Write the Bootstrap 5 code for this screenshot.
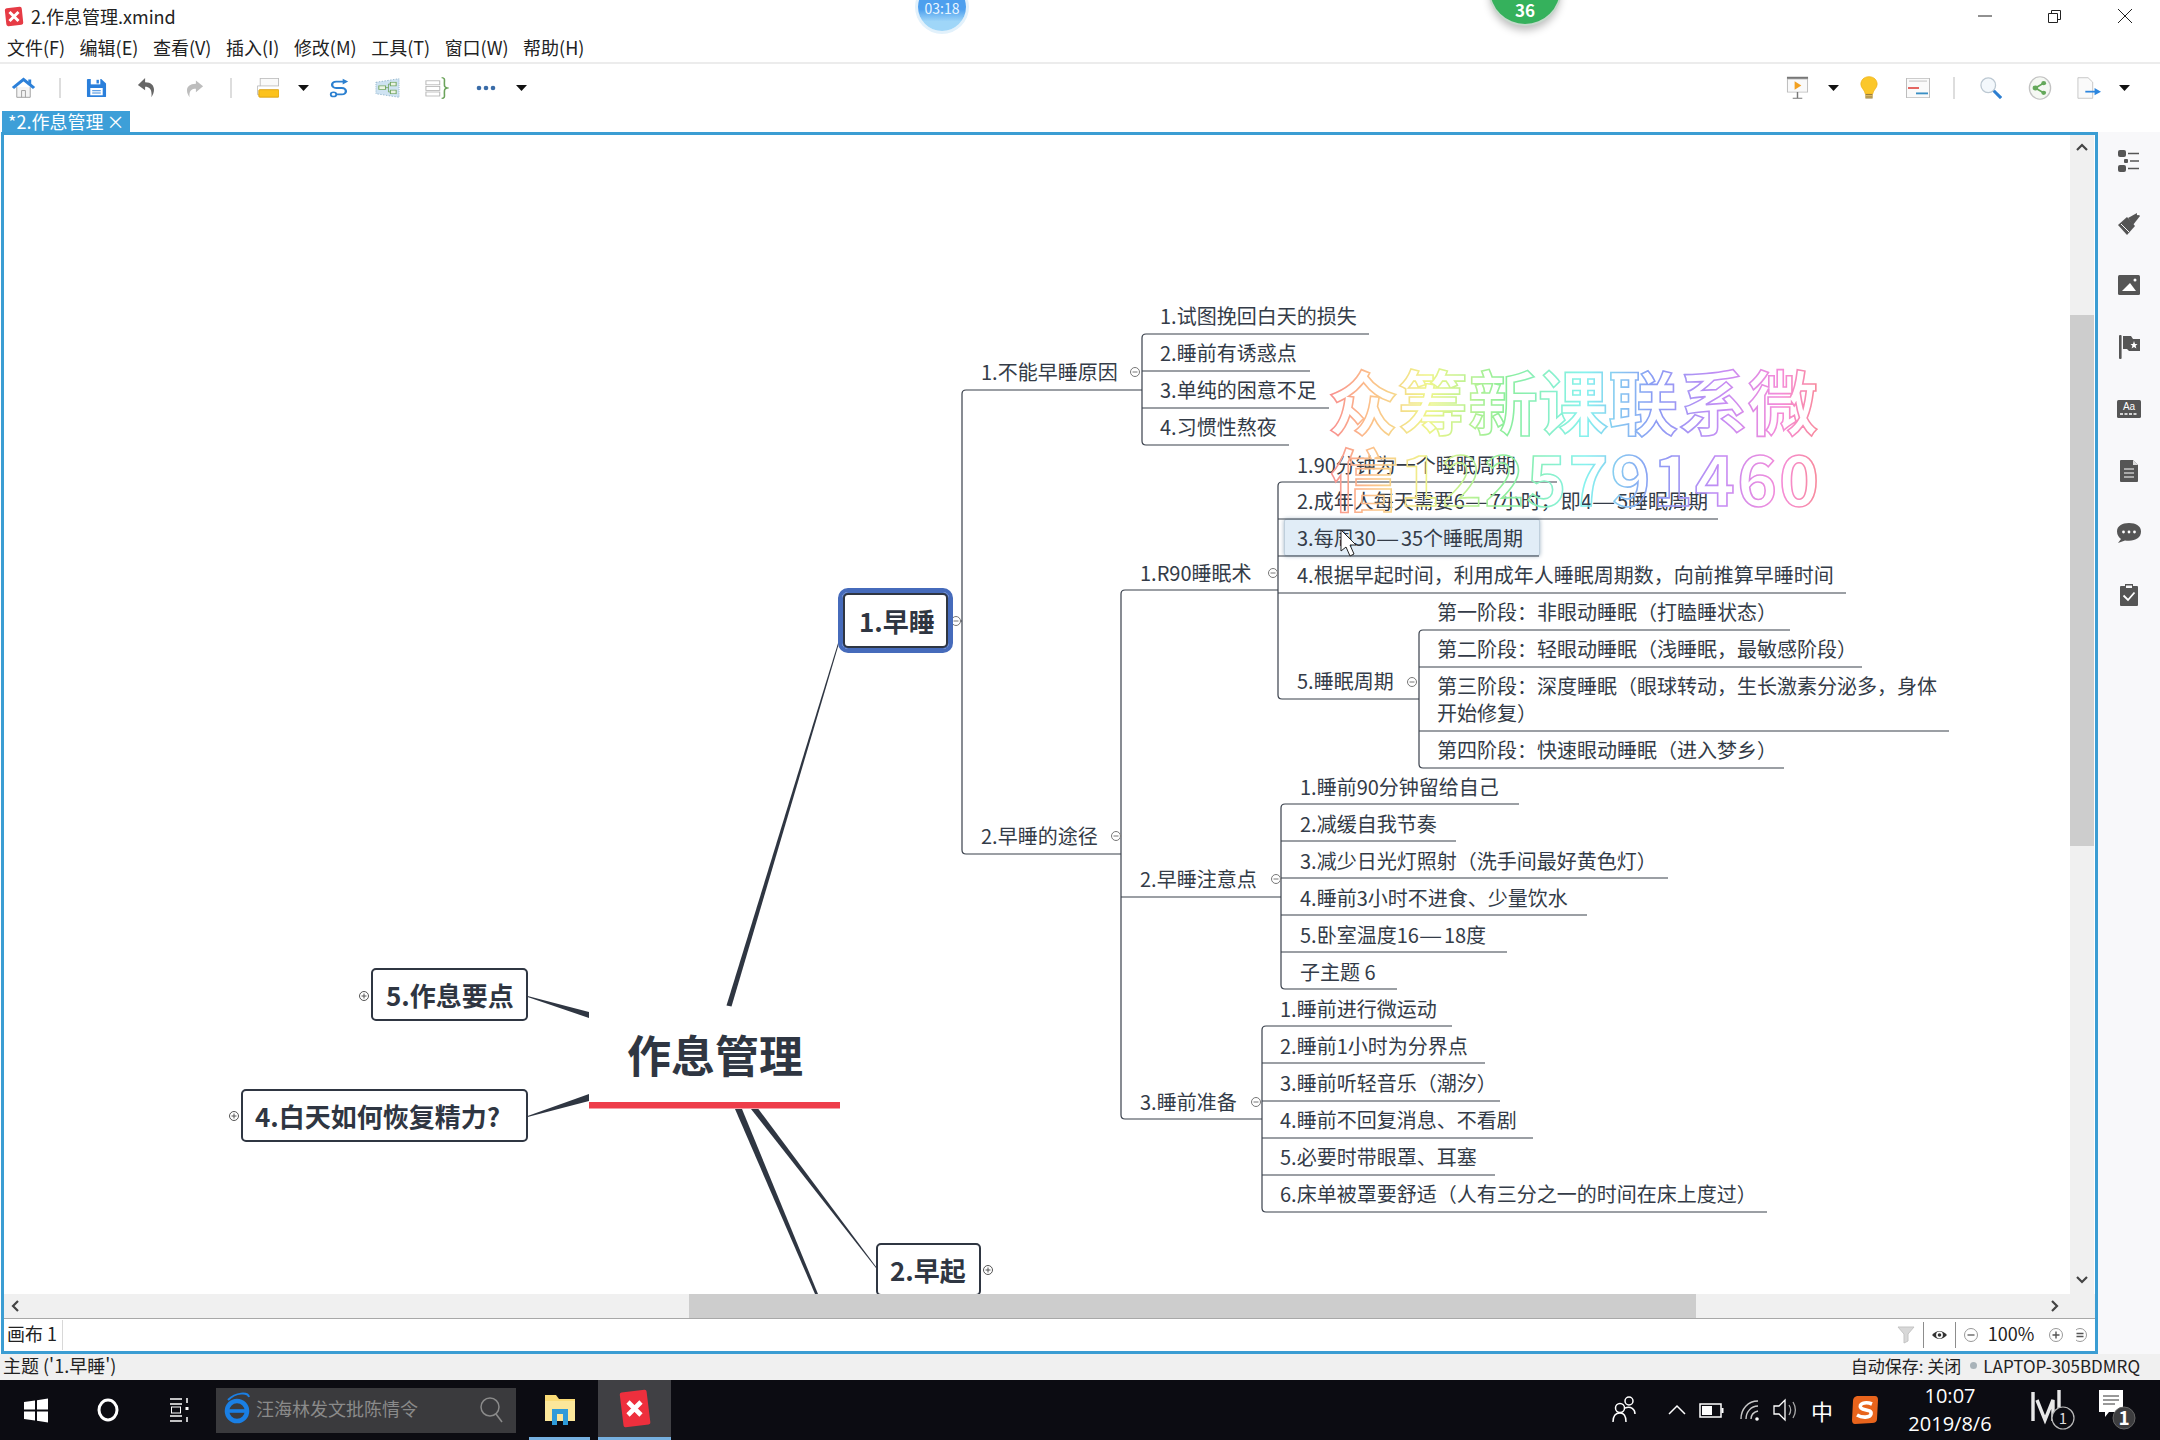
<!DOCTYPE html>
<html lang="zh-CN">
<head>
    <meta charset="UTF-8">
    <title>2.作息管理.xmind</title>
    <link href="https://cdn.jsdelivr.net/npm/bootstrap@5.3.0/dist/css/bootstrap.min.css" rel="stylesheet">
    <style>
        body {
            width: 2160px;
            height: 1440px;
            overflow: hidden;
            background: #fff;
            color: #222;
            font-family: "Noto Sans CJK SC", "Liberation Sans", sans-serif;
            font-size: 18px;
        }
        /* title, menu and tool bars */
        .title-bar { height: 32px; }
        .app-title { margin-left: 7px; }
        .win-btn { width: 70px; height: 32px; }
        .menu-bar { height: 30px; padding-left: 7px; gap: 14.5px; line-height: 30px; }
        .tool-bar { height: 49px; border-top: 2px solid #ececec; margin-left: -1px; }
        .tb-cell { width: 49px; height: 47px; }
        .tb-narrow { width: 22px; height: 47px; }
        .tb-sep { width: 24px; height: 47px; }
        .tb-right { padding-right: 25px; }
        .tab-strip { height: 21px; padding-left: 2px; }
        .file-tab {
            width: 128px;
            height: 21px;
            padding-left: 6px;
            background: #3d9fd8;
            color: #fff;
            font-size: 18px;
            line-height: 21px;
            white-space: nowrap;
        }
        .file-tab span { margin-left: 3px; }
        /* editor frame */
        .editor-row { height: 1222px; }
        .editor-frame {
            width: 2097px;
            margin-left: 1px;
            border: 3px solid #3b9dd3;
        }
        .map-area { height: 1159px; }
        .map-canvas { width: 2066px; height: 1159px; overflow: hidden; }
        .map-lines { position: absolute; left: 0; top: 0; }
        .v-scroll { width: 24px; background: #f0f0f0; }
        .v-up { height: 180px; padding-top: 8px; }
        .v-thumb { height: 531px; background: #cdcdcd; }
        .v-down { padding-bottom: 10px; }
        .h-scroll { height: 24px; background: #f0f0f0; }
        .h-left { width: 685px; padding-left: 7px; }
        .h-thumb { width: 1007px; background: #cdcdcd; }
        .h-right { padding-right: 36px; }
        .sheet-bar { height: 33px; border-top: 1px solid #a8a8a8; }
        .sheet-tab { width: 59px; padding: 0 0 3px 3px; border-right: 1px solid #d8d8d8; white-space: nowrap; }
        .sheet-tools { margin-right: 2px; }
        .sheet-sep { width: 1px; height: 26px; background: #8d8d8d; }
        .zoom-val { width: 50px; padding-bottom: 3px; color: #222; }
        .side-panel { background: #f8f8fa; padding-top: 17px; gap: 38px; }
        .side-cell { height: 24px; }
        /* map nodes */
        .mm-text {
            position: absolute;
            transform: translateY(-50%);
            color: #343c48;
            font-size: 20px;
            line-height: 1.2;
            white-space: nowrap;
        }
        .mm-dash { display: inline-block; width: 25px; transform: scaleX(1.3); transform-origin: left center; }
        .mm-topic {
            position: absolute;
            border: 2px solid #2f3642;
            border-radius: 5px;
            background: #fff;
            color: #2f3642;
            font-size: 26px;
            font-weight: 700;
            line-height: 1.2;
            white-space: nowrap;
        }
        .mm-topic-on {
            outline: 4px solid #466bbb;
            outline-offset: 1px;
            box-shadow: 0 0 0 1px #466bbb;
        }
        .mm-root {
            position: absolute;
            transform: translate(-50%, -50%);
            color: #2f3642;
            font-size: 44px;
            font-weight: 700;
            line-height: 1.2;
            white-space: nowrap;
        }
        .mm-hilite {
            position: absolute;
            background: #e1edf7;
            border: 1px solid #bfcfdc;
            border-radius: 2px;
            box-shadow: 0 0 4px #9fb2c2;
        }
        .wm-text {
            font-family: "Noto Sans CJK SC", sans-serif;
            font-weight: 700;
            fill: none;
            stroke: url(#rainbow);
            stroke-width: 1.6px;
        }
        /* status and task bars */
        .status-bar { height: 26px; padding: 0 20px 3px 3px; background: #f0f0f0; font-size: 17px; white-space: nowrap; }
        .status-topic { font-size: 18px; }
        .status-dot { width: 7px; height: 7px; margin: 0 6px 0 9px; border-radius: 50%; background: #a9b3b9; }
        .task-bar { height: 60px; background: #0c0c12; color: #fff; }
        .search-box {
            width: 300px;
            height: 45px;
            margin: 0 13px 0 0;
            background: #3a3a3d;
            color: #8a8a8a;
            padding-right: 12px;
        }
        .search-box span { flex: 1; padding-bottom: 3px; white-space: nowrap; }
        .task-app { height: 60px; border-bottom: 3px solid #76b0e0; }
        .task-folder { width: 61px; margin-right: 8px; }
        .task-xmind { width: 73px; background: #404044; }
        .tray-ime { width: 38px; font-size: 22px; text-align: center; }
        .tray-clock { width: 114px; font-family: "Open Sans", "Noto Sans CJK SC", sans-serif; font-size: 20px; line-height: 28px; text-align: center; }
        .tray-end { margin-right: 19px; }
        /* floating timers from the recording tool */
        .float-timer {
            position: absolute;
            left: 918px;
            top: -17px;
            width: 48px;
            height: 48px;
            border-radius: 50%;
            background: linear-gradient(#4d9fee 55%, #9fd6f8 80%);
            box-shadow: 0 0 0 3px #e2f1fb;
            color: #e8f5ff;
            font-size: 14px;
            text-align: center;
            padding-top: 17px;
            line-height: 16px;
        }
        .float-count {
            position: absolute;
            left: 1490px;
            top: -46px;
            width: 70px;
            height: 70px;
            border-radius: 50%;
            background: #35b15c;
            box-shadow: 0 0 0 2px #c5d8cb, 0 6px 8px #b9b9b9;
            color: #fff;
            font-size: 17px;
            font-weight: 700;
            text-align: center;
            padding-top: 44px;
            line-height: 24px;
        }
    </style>
</head>
<body>
<div class="d-flex flex-column">

    <!-- Title bar -->
    <div class="title-bar d-flex align-items-center">
        <svg class="ms-1" width="20" height="21" viewBox="0 0 20 21"><rect x="1.5" y="1.5" width="17" height="18" rx="2" fill="#e63b45" transform="rotate(-6 10 10)"/><path d="M5.5 6 14.5 15M14.5 6 5.5 15" stroke="#fff" stroke-width="3"/></svg>
        <span class="app-title">2.作息管理.xmind</span>
        <div class="ms-auto d-flex">
            <div class="win-btn d-flex align-items-center justify-content-center"><svg width="16" height="16"><path d="M1 8H15" stroke="#222" stroke-width="1"/></svg></div>
            <div class="win-btn d-flex align-items-center justify-content-center"><svg width="16" height="16"><path d="M1.5 5.5H10.5V14.5H1.5ZM4.5 5V2.5H13.5V11.5H11" fill="none" stroke="#222"/></svg></div>
            <div class="win-btn d-flex align-items-center justify-content-center"><svg width="16" height="16"><path d="M1 1 15 15M15 1 1 15" stroke="#222"/></svg></div>
        </div>
    </div>

    <!-- Menu -->
    <div class="menu-bar d-flex">
        <span>文件(F)</span><span>编辑(E)</span><span>查看(V)</span><span>插入(I)</span><span>修改(M)</span><span>工具(T)</span><span>窗口(W)</span><span>帮助(H)</span>
    </div>

    <!-- Toolbar -->
    <div class="tool-bar d-flex align-items-center">
        <div class="tb-cell d-flex align-items-center justify-content-center">
            <svg width="25" height="22" viewBox="0 0 26 26" preserveAspectRatio="none"><path d="M6 12V24H20V12" fill="#f4f4f4" stroke="#9a9a9a"/><path d="M11 24V16H15V24" fill="none" stroke="#9a9a9a"/><path d="M2 13 13 3 24 13" fill="none" stroke="#2c80d9" stroke-width="3.4"/><path d="M18 3h3v6l-3-3z" fill="#2c80d9"/></svg>
        </div>
        <div class="tb-sep d-flex align-items-center justify-content-center"><svg width="2" height="20"><path d="M1 0V20" stroke="#bbb"/></svg></div>
        <div class="tb-cell d-flex align-items-center justify-content-center">
            <svg width="21" height="20" viewBox="0 0 22 22" preserveAspectRatio="none"><path d="M1 2Q1 1 2 1H16L21 6V20Q21 21 20 21H2Q1 21 1 20Z" fill="#2a7fdb"/><rect x="5" y="1" width="10" height="6" fill="#fff"/><rect x="11" y="2" width="2.5" height="4" fill="#2a7fdb"/><rect x="4.5" y="11" width="13" height="8" fill="#fff"/><path d="M6.5 14H15.5M6.5 16.500H15.5" stroke="#2a7fdb"/></svg>
        </div>
        <div class="tb-cell d-flex align-items-center justify-content-center">
            <svg width="18" height="21" viewBox="0 0 20 24" preserveAspectRatio="none"><path d="M9 1 1 9 9 15V11C14 11 17 14 16 23 21 16 20 6 9 6Z" fill="#666"/></svg>
        </div>
        <div class="tb-cell d-flex align-items-center justify-content-center">
            <svg width="18" height="20" viewBox="0 0 20 24" preserveAspectRatio="none"><path d="M11 3 19 10 11 17V13C6 13 3 16 4 23-1 16 0 7 11 7Z" fill="#bdbdbd"/></svg>
        </div>
        <div class="tb-sep d-flex align-items-center justify-content-center"><svg width="2" height="20"><path d="M1 0V20" stroke="#bbb"/></svg></div>
        <div class="tb-cell d-flex align-items-center justify-content-center">
            <svg width="22" height="20" viewBox="0 0 24 24" preserveAspectRatio="none"><rect x="3.5" y="0.5" width="20" height="9" fill="#fafafa" stroke="#bdbdbd"/><path d="M3.5 9.5H0.5V20H3" fill="none" stroke="#bdbdbd"/><rect x="2" y="14" width="22" height="9" rx="1" fill="#fcc21c" stroke="#d89f10"/></svg>
        </div>
        <div class="tb-narrow d-flex align-items-center justify-content-center"><svg width="11" height="6"><path d="M0 0H11L5.5 6Z" fill="#111"/></svg></div>
        <div class="tb-cell d-flex align-items-center justify-content-center">
            <svg width="22" height="20" viewBox="0 0 24 28" preserveAspectRatio="none"><path d="M19 5H9C3 5 3 14 9 14H15C21 14 21 23 15 23H9" fill="none" stroke="#2c80d0" stroke-width="2.6"/><path d="M16 1 22 5 16 9Z" fill="#2c80d0"/><circle cx="6" cy="23" r="3" fill="#fff" stroke="#2c80d0" stroke-width="2"/></svg>
        </div>
        <div class="tb-cell d-flex align-items-center justify-content-center">
            <svg width="25" height="20" viewBox="0 0 26 28" preserveAspectRatio="none"><path d="M1 6 25 1V27L1 22Z" fill="#cfe3f2" stroke="#8bb0c8" stroke-dasharray="1.5 1.5"/><rect x="4" y="11" width="7" height="5" fill="#eaf3e2" stroke="#6fa35c"/><rect x="16" y="6" width="6" height="5" fill="#eaf3e2" stroke="#6fa35c"/><rect x="16" y="17" width="6" height="5" fill="#eaf3e2" stroke="#6fa35c"/><path d="M11 13.5H14M14 8.500V19.500M14 8.500H16M14 19.500H16" fill="none" stroke="#6fa35c"/></svg>
        </div>
        <div class="tb-cell d-flex align-items-center justify-content-center">
            <svg width="24" height="24" viewBox="0 0 26 30" preserveAspectRatio="none"><rect x="1" y="6" width="15" height="5" fill="#fff" stroke="#b2b2b2"/><rect x="1" y="13" width="15" height="5" fill="#fff" stroke="#b2b2b2"/><rect x="1" y="20" width="15" height="5" fill="#fff" stroke="#b2b2b2"/><path d="M18 2C22 2 21 5 21 9S21 14 24 15C21 16 21 17 21 21S22 28 18 28" fill="none" stroke="#6ba35b" stroke-width="1.7"/></svg>
        </div>
        <div class="tb-cell d-flex align-items-center justify-content-center">
            <svg width="20" height="6"><circle cx="3" cy="3" r="2.3" fill="#3a6ca8"/><circle cx="10" cy="3" r="2.3" fill="#3a6ca8"/><circle cx="17" cy="3" r="2.3" fill="#3a6ca8"/></svg>
        </div>
        <div class="tb-narrow d-flex align-items-center justify-content-center"><svg width="11" height="6"><path d="M0 0H11L5.5 6Z" fill="#111"/></svg></div>

        <div class="ms-auto tb-right d-flex align-items-center">
            <div class="tb-cell d-flex align-items-center justify-content-center">
                <svg width="23" height="23" viewBox="0 0 24 30" preserveAspectRatio="none"><rect x="1" y="1" width="22" height="3" fill="#777"/><rect x="1.5" y="4" width="21" height="17" fill="#f9f9f9" stroke="#bbb"/><path d="M9 7 16 12.5 9 18Z" fill="#f2a01f"/><path d="M12 21V29M7 29H17" stroke="#777" stroke-width="1.5"/></svg>
            </div>
            <div class="tb-narrow d-flex align-items-center justify-content-center"><svg width="11" height="6"><path d="M0 0H11L5.5 6Z" fill="#111"/></svg></div>
            <div class="tb-cell d-flex align-items-center justify-content-center">
                <svg width="18" height="24" viewBox="0 0 20 32" preserveAspectRatio="none"><path d="M10 1C4 1 1 6 1 11 1 16 5 18 6 24H14C15 18 19 16 19 11 19 6 16 1 10 1Z" fill="#fbc72a" stroke="#f0b419"/><rect x="6" y="24" width="8" height="6" fill="#9a7f3c"/><path d="M6 26H14M6 28H14" stroke="#e8c66b"/></svg>
            </div>
            <div class="tb-cell d-flex align-items-center justify-content-center">
                <svg width="24" height="20" viewBox="0 0 24 26" preserveAspectRatio="none"><rect x="0.5" y="0.5" width="23" height="25" fill="#fafafa" stroke="#bdbdbd"/><path d="M3 4H21" stroke="#bbb"/><path d="M2 13H13" stroke="#e25a55" stroke-width="2.4"/><path d="M10 20H22" stroke="#3a8fc4" stroke-width="2.4"/></svg>
            </div>
            <div class="tb-sep d-flex align-items-center justify-content-center"><svg width="2" height="22"><path d="M1 0V22" stroke="#bbb"/></svg></div>
            <div class="tb-cell d-flex align-items-center justify-content-center">
                <svg width="22" height="22" viewBox="0 0 24 24"><circle cx="9" cy="9" r="8" fill="#f3f8fc" stroke="#bcc8d2" stroke-width="1.4"/><path d="M15 15 23 23" stroke="#2c7ed1" stroke-width="3.4"/></svg>
            </div>
            <div class="tb-cell d-flex align-items-center justify-content-center">
                <svg width="24" height="24" viewBox="0 0 26 30" preserveAspectRatio="none"><ellipse cx="13" cy="15" rx="11.500" ry="14" fill="#f5f8f3" stroke="#c2c2c2" stroke-width="1.4"/><path d="M8 15 17 9M8 15 17 21" stroke="#64a85a" stroke-width="2"/><circle cx="8" cy="15" r="3" fill="#64a85a"/><circle cx="17" cy="9" r="2.6" fill="#64a85a"/><circle cx="17" cy="21" r="2.6" fill="#64a85a"/></svg>
            </div>
            <div class="tb-cell d-flex align-items-center justify-content-center">
                <svg width="24" height="22" viewBox="0 0 26 30" preserveAspectRatio="none"><path d="M1 1H12L17 7V29H1Z" fill="#fafafa" stroke="#bdbdbd"/><path d="M9 20H21" stroke="#2d86de" stroke-width="2.4"/><path d="M19 15 26 20 19 25Z" fill="#2d86de"/></svg>
            </div>
            <div class="tb-narrow d-flex align-items-center justify-content-center"><svg width="11" height="6"><path d="M0 0H11L5.5 6Z" fill="#111"/></svg></div>
        </div>
    </div>

    <!-- File tabs -->
    <div class="tab-strip d-flex">
        <div class="file-tab">*2.作息管理<span>×</span></div>
    </div>

    <!-- Editor + side panel -->
    <div class="editor-row d-flex">
        <div class="editor-frame d-flex flex-column">
            <div class="map-area d-flex">
                <div class="map-canvas position-relative" id="mapCanvas"></div>
                <div class="v-scroll d-flex flex-column">
                    <div class="v-up d-flex justify-content-center"><svg width="12" height="8"><path d="M1 7 6 2 11 7" fill="none" stroke="#444" stroke-width="2.2"/></svg></div>
                    <div class="v-thumb"></div>
                    <div class="v-down flex-grow-1 d-flex justify-content-center align-items-end"><svg width="12" height="8"><path d="M1 1 6 6 11 1" fill="none" stroke="#444" stroke-width="2.2"/></svg></div>
                </div>
            </div>
            <div class="h-scroll d-flex">
                <div class="h-left d-flex align-items-center"><svg width="8" height="12"><path d="M7 1 2 6 7 11" fill="none" stroke="#444" stroke-width="2.2"/></svg></div>
                <div class="h-thumb"></div>
                <div class="h-right flex-grow-1 d-flex align-items-center justify-content-end"><svg width="8" height="12"><path d="M1 1 6 6 1 11" fill="none" stroke="#444" stroke-width="2.2"/></svg></div>
            </div>
            <div class="sheet-bar d-flex align-items-center">
                <div class="sheet-tab">画布 1</div>
                <div class="ms-auto sheet-tools d-flex align-items-center">
                    <svg width="24" height="18" viewBox="0 0 24 18"><path d="M3 1H19L13 8V15L9 17V8Z" fill="#d8d8d8" stroke="#c4c4c4"/></svg>
                    <div class="sheet-sep ms-1"></div>
                    <svg width="31" height="18" viewBox="0 0 31 18"><path d="M8 9Q15.5 1 23 9 15.5 17 8 9Z" fill="#333"/><circle cx="15.5" cy="9" r="3.4" fill="#fff"/><circle cx="15.5" cy="9" r="1.8" fill="#333"/></svg>
                    <div class="sheet-sep"></div>
                    <svg width="30" height="18" viewBox="0 0 30 18"><circle cx="15" cy="9" r="6.5" fill="none" stroke="#999"/><path d="M11.5 9H18.5" stroke="#666" stroke-width="1.4"/></svg>
                    <div class="zoom-val text-center">100%</div>
                    <svg width="40" height="18" viewBox="0 0 40 18"><circle cx="20" cy="9" r="6.5" fill="none" stroke="#999"/><path d="M16.5 9H23.5M20 5.5V12.5" stroke="#555" stroke-width="1.4"/></svg>
                    <svg width="17" height="18" viewBox="0 0 17 18"><circle cx="4" cy="9" r="6.5" fill="none" stroke="#999"/><path d="M0.5 7.5H7.5M0.5 10.5H7.5" stroke="#555" stroke-width="1.4"/></svg>
                </div>
            </div>
        </div>

        <div class="side-panel flex-grow-1 d-flex flex-column align-items-center">
            <div class="side-cell d-flex align-items-center"><svg width="24" height="24" viewBox="0 0 24 24"><rect x="1" y="1" width="8" height="7" rx="2" fill="#555"/><rect x="7" y="10" width="4" height="4" rx="1" fill="#555"/><rect x="1" y="16" width="8" height="7" rx="2" fill="#555"/><path d="M11 4.5H22M13 12H22M11 19.5H22" stroke="#555" stroke-width="1.6"/></svg></div>
            <div class="side-cell d-flex align-items-center"><svg width="24" height="26" viewBox="0 0 24 26"><path d="M1 15 10 7 18 16 10 25Z" fill="#555"/><path d="M11 8 20 3 23 6 16 15Z" fill="#555"/><circle cx="21" cy="4" r="1.2" fill="#fff"/><path d="M4 14 12 22" stroke="#f8f8fa" stroke-width="1"/></svg></div>
            <div class="side-cell d-flex align-items-center"><svg width="24" height="22" viewBox="0 0 24 22"><rect x="1" y="1" width="22" height="20" rx="1.5" fill="#555"/><path d="M5 17 13 9 19 17Z" fill="#fff"/><circle cx="18" cy="6" r="1.5" fill="#fff"/></svg></div>
            <div class="side-cell d-flex align-items-center"><svg width="24" height="24" viewBox="0 0 24 24"><rect x="2" y="0" width="2.6" height="24" rx="1" fill="#555"/><path d="M6 1H14L16 4H23V16H12L10 14H6Z" fill="#555"/><path d="M17 6 18 9H20.5L18.6 10.8 19.4 13.4 17 12 14.6 13.4 15.4 10.8 13.5 9H16Z" fill="#fff"/></svg></div>
            <div class="side-cell d-flex align-items-center"><svg width="26" height="20" viewBox="0 0 26 20"><rect x="1" y="1" width="24" height="18" rx="1.5" fill="#555"/><text x="13" y="11" text-anchor="middle" font-family="Liberation Sans" font-size="10" fill="#fff">Aa</text><path d="M4 15H22" stroke="#fff" stroke-width="1.4" stroke-dasharray="3 1.5"/></svg></div>
            <div class="side-cell d-flex align-items-center"><svg width="20" height="24" viewBox="0 0 20 24"><path d="M1 2Q1 1 2 1H14L19 6V22Q19 23 18 23H2Q1 23 1 22Z" fill="#555"/><path d="M14 1V6H19" fill="#ddd"/><path d="M5 10H15M5 14H15M5 18H15" stroke="#fff"/></svg></div>
            <div class="side-cell d-flex align-items-center"><svg width="26" height="22" viewBox="0 0 26 22"><path d="M13 1C6 1 1 4 1 9.5 1 13 3 15.5 5 17L2 21 9 18.5C10 18.7 11.5 18.7 13 18.7 20 18.7 25 15.5 25 9.5 25 4 20 1 13 1Z" fill="#555"/><circle cx="7.5" cy="10" r="1.4" fill="#fff"/><circle cx="13" cy="10" r="1.4" fill="#fff"/><circle cx="18.5" cy="10" r="1.4" fill="#fff"/></svg></div>
            <div class="side-cell d-flex align-items-center"><svg width="20" height="24" viewBox="0 0 20 24"><path d="M1 4Q1 3 2 3H6V1H14V3H18Q19 3 19 4V22Q19 23 18 23H2Q1 23 1 22Z" fill="#555"/><path d="M7 2.5H13V5H7Z" fill="#f8f8fa"/><path d="M4.5 12.5 9 17 15.5 9.5" fill="none" stroke="#fff" stroke-width="1.8"/></svg></div>
        </div>
    </div>

    <!-- Status bar -->
    <div class="status-bar d-flex align-items-center">
        <span class="status-topic">主题 ('1.早睡')</span>
        <span class="ms-auto">自动保存: 关闭</span>
        <div class="status-dot"></div>
        <span>LAPTOP-305BDMRQ</span>
    </div>

    <!-- Windows task bar -->
    <div class="task-bar d-flex align-items-center">
        <svg width="72" height="60" viewBox="0 0 72 60"><path d="M24 22 35 20.500V29.500H24ZM37 20.200 48 18.500V29.500H37ZM24 31.500H35V40.500L24 39ZM37 31.500H48V42.500L37 40.800Z" fill="#fff"/></svg>
        <svg width="72" height="60" viewBox="0 0 72 60"><ellipse cx="36" cy="30" rx="9" ry="10" fill="none" stroke="#fff" stroke-width="3"/></svg>
        <svg width="72" height="60" viewBox="0 0 72 60"><path d="M26 19H38M26 24H38M26 36H38M26 41H38" stroke="#fff" stroke-width="1.5"/><rect x="27.500" y="27" width="9" height="6" fill="none" stroke="#fff"/><path d="M43 18V23M43 37V42" stroke="#fff" stroke-width="1.500"/><rect x="41.500" y="27" width="3" height="3" fill="#fff"/></svg>
        <div class="search-box d-flex align-items-center">
            <svg width="40" height="45" viewBox="0 0 40 45"><ellipse cx="21" cy="23" rx="10" ry="10" fill="none" stroke="#1a7fe4" stroke-width="4.600"/><path d="M11 23H31" stroke="#1a7fe4" stroke-width="3.600"/><path d="M12 12C20 4 32 4 33 9" fill="none" stroke="#1a7fe4" stroke-width="2"/></svg>
            <span>汪海林发文批陈情令</span>
            <svg width="26" height="30" viewBox="0 0 26 30"><circle cx="12" cy="12" r="9" fill="none" stroke="#8a8a8a" stroke-width="1.500"/><path d="M18 19 24 27" stroke="#8a8a8a" stroke-width="1.500"/></svg>
        </div>
        <div class="task-app task-folder d-flex align-items-center justify-content-center">
            <svg width="34" height="34" viewBox="0 0 34 34"><path d="M2 3H13L16 7H32V29H2Z" fill="#fadb76"/><path d="M2 9H32V29H2Z" fill="#fce79a"/><path d="M9 17H25V33H20V22H14V33H9Z" fill="#2d9bd9"/></svg>
        </div>
        <div class="task-app task-xmind d-flex align-items-center justify-content-center">
            <svg width="32" height="42" viewBox="0 0 32 42"><rect x="2.500" y="3" width="27" height="35" rx="2" fill="#ee2f3d" transform="rotate(-7 16 20)"/><path d="M9 14 22 27M22 14 9 27" stroke="#fff" stroke-width="4.600"/></svg>
        </div>

        <div class="ms-auto d-flex align-items-center">
            <svg width="52" height="34" viewBox="0 0 52 34"><circle cx="21" cy="15" r="4.500" fill="none" stroke="#fff" stroke-width="1.500"/><circle cx="30" cy="8" r="4" fill="none" stroke="#fff" stroke-width="1.500"/><path d="M14 29C14 23 17 20 21 20S27 24 27 29M26 15C32 13 36 16 36 21" fill="none" stroke="#fff" stroke-width="1.500"/></svg>
            <svg class="ms-2" width="36" height="34" viewBox="0 0 36 34"><path d="M10 21 18 13 26 21" fill="none" stroke="#fff" stroke-width="1.500"/></svg>
            <svg width="32" height="34" viewBox="0 0 32 34"><rect x="5" y="11" width="21" height="13" fill="none" stroke="#fff" stroke-width="1.500"/><rect x="7" y="13" width="10" height="9" fill="#fff"/><rect x="26.500" y="15" width="2" height="5" fill="#fff"/></svg>
            <svg class="ms-1" width="38" height="34" viewBox="0 0 38 34"><path d="M10 26C10 16 17 8 27 8M15 26C15 19 20 13 27 13M20 26C20 22 23 19 27 18" fill="none" stroke="#c9c9c9" stroke-width="1.400"/><circle cx="26" cy="26" r="1.800" fill="#fff"/></svg>
            <svg width="34" height="34" viewBox="0 0 34 34"><path d="M5 13H10L16 7V27L10 21H5Z" fill="none" stroke="#fff" stroke-width="1.300"/><path d="M20 12C22 15 22 19 20 22M24 9C27 14 27 20 24 25" fill="none" stroke="#aaa" stroke-width="1.300"/></svg>
            <div class="tray-ime">中</div>
            <svg class="ms-1" width="40" height="34" viewBox="0 0 40 34"><path d="M12 3H30Q33 3 33 7L32 26Q32 30 27 30L10 31Q7 31 7 27L8 8Q8 4 12 3Z" fill="#e8641c"/><path d="M27 11C20 8 13 11 16 15 19 18 27 16 26 21 25 25 17 25 12 22" fill="none" stroke="#fff" stroke-width="3.600"/></svg>
            <div class="tray-clock ms-2"><div>10:07</div><div>2019/8/6</div></div>
            <svg class="ms-3" width="56" height="44" viewBox="0 0 56 44"><path d="M10 4V33M14 12 22 32 30 12V33M36 2V33" fill="none" stroke="#e8e8e8" stroke-width="3.400"/><circle cx="40" cy="30" r="11" fill="#0c0c12" stroke="#bbb" stroke-width="1.200"/><text x="40" y="36" text-anchor="middle" font-size="15" fill="#ddd">1</text></svg>
            <svg class="ms-3 tray-end" width="46" height="44" viewBox="0 0 46 44"><path d="M4 2H28V24H14L10 29V24H4Z" fill="#fff"/><path d="M8 8H24M8 12H24M8 16H20" stroke="#333"/><circle cx="29" cy="30" r="11" fill="#3d3d3f" stroke="#666"/><text x="29" y="37" text-anchor="middle" font-size="19" font-weight="700" fill="#fff">1</text></svg>
        </div>
    </div>
</div>

<div class="float-timer">03:18</div>
<div class="float-count">36</div>

<script>
    // Everything on the map is in page coordinates, canvas starts at 4,135
    const OX = 4, OY = 135, LINE = '#39404b';
    const canvas = document.getElementById('mapCanvas');

    // [text, centre y, underline y, underline right end]
    const groups = [
        { vx: 962, tx: 981, rows: [['1.不能早睡原因', 372, 390, 1142], ['2.早睡的途径', 836, 854, 1121]] },
        { vx: 1142, tx: 1160, rows: [
            ['1.试图挽回白天的损失', 316, 334, 1369], ['2.睡前有诱惑点', 353, 371, 1310],
            ['3.单纯的困意不足', 390, 408, 1329], ['4.习惯性熬夜', 427, 445, 1289]] },
        { vx: 1121, tx: 1140, rows: [['1.R90睡眠术', 573, 590, 1278], ['2.早睡注意点', 879, 897, 1281], ['3.睡前准备', 1102, 1119, 1262]] },
        { vx: 1278, tx: 1297, rows: [
            ['1.90分钟为一个睡眠周期', 465, 482, 1557], ['2.成年人每天需要6—7小时，即4—5睡眠周期', 501, 519, 1718],
            ['3.每周30—35个睡眠周期', 538, 556, 1539], ['4.根据早起时间，利用成年人睡眠周期数，向前推算早睡时间', 575, 593, 1846],
            ['5.睡眠周期', 681, 699, 1419]] },
        { vx: 1419, tx: 1437, rows: [
            ['第一阶段：非眼动睡眠（打瞌睡状态）', 612, 630, 1790], ['第二阶段：轻眼动睡眠（浅睡眠，最敏感阶段）', 649, 667, 1862],
            ['第三阶段：深度睡眠（眼球转动，生长激素分泌多，身体', 686, 731, 1949], ['第四阶段：快速眼动睡眠（进入梦乡）', 750, 768, 1784]] },
        { vx: 1281, tx: 1300, rows: [
            ['1.睡前90分钟留给自己', 787, 804, 1519], ['2.减缓自我节奏', 824, 841, 1456],
            ['3.减少日光灯照射（洗手间最好黄色灯）', 861, 878, 1668], ['4.睡前3小时不进食、少量饮水', 898, 915, 1587],
            ['5.卧室温度16—18度', 935, 952, 1507], ['子主题 6', 972, 989, 1397]] },
        { vx: 1262, tx: 1280, rows: [
            ['1.睡前进行微运动', 1009, 1026, 1452], ['2.睡前1小时为分界点', 1046, 1063, 1485],
            ['3.睡前听轻音乐（潮汐）', 1083, 1101, 1500], ['4.睡前不回复消息、不看剧', 1120, 1138, 1533],
            ['5.必要时带眼罩、耳塞', 1157, 1175, 1495], ['6.床单被罩要舒适（人有三分之一的时间在床上度过）', 1194, 1212, 1767]] }
    ];
    const extraText = [['开始修复）', 1437, 713]];

    // [text, left, top, width, height, left padding, selected]
    const topics = [
        ['1.早睡', 843, 593, 105, 55, 14, true],
        ['5.作息要点', 371, 968, 157, 53, 13, false],
        ['4.白天如何恢复精力?', 241, 1089, 287, 53, 12, false],
        ['2.早起', 876, 1243, 105, 53, 12, false]
    ];

    // Collapse markers: [x, y, collapsed]
    const markers = [
        [956, 621, false], [1135, 372, false], [1116, 836, false], [1273, 573, false], [1412, 682, false],
        [1276, 879, false], [1256, 1102, false], [364, 996, true], [234, 1116, true], [988, 1270, true]
    ];

    let svg = '<path d="M948 621H962" stroke="' + LINE + '" fill="none"/>';
    groups.forEach(g => {
        const r = 4, first = g.rows[0], last = g.rows[g.rows.length - 1];
        svg += `<path d="M${first[3]} ${first[2]}H${g.vx + r}Q${g.vx} ${first[2]} ${g.vx} ${first[2] + r}V${last[2] - r}Q${g.vx} ${last[2]} ${g.vx + r} ${last[2]}H${last[3]}" fill="none" stroke="${LINE}" stroke-width="1.2"/>`;
        g.rows.slice(1, -1).forEach(row => {
            svg += `<path d="M${g.vx} ${row[2]}H${row[3]}" stroke="${LINE}" stroke-width="1.2"/>`;
        });
    });

    // Branches from the central topic get thinner towards the child
    [
        '726.500,1005.600 731.500,1006.500 840,640 839,640',
        '527.600,996 589,1012 589,1018 527.600,997',
        '527.600,1116 589,1094 589,1101 527.600,1117',
        '751,1109 758.400,1109 877,1268 876,1268',
        '735,1109 742,1109 818,1294 815,1294'
    ].forEach(p => { svg += `<polygon points="${p}" fill="#2f3642"/>`; });
    svg += '<rect x="589" y="1102" width="251" height="6.500" fill="#ee3d4a"/>';

    markers.forEach(m => {
        const col = m[2] ? '#555' : '#777';
        svg += `<circle cx="${m[0]}" cy="${m[1]}" r="4.500" fill="#fff" stroke="${col}"/><path d="M${m[0] - 2.500} ${m[1]}H${m[0] + 2.500}${m[2] ? `M${m[0]} ${m[1] - 2.500}V${m[1] + 2.500}` : ''}" stroke="${col}"/>`;
    });

    function place(el, x, y) {
        el.style.left = (x - OX) + 'px';
        el.style.top = (y - OY) + 'px';
        canvas.appendChild(el);
    }

    function addText(text, x, y) {
        const el = document.createElement('div');
        el.className = 'mm-text';
        // the em dash of this font is narrower than the one in the app
        el.innerHTML = text.replace(/—/g, '<span class="mm-dash">—</span>');
        place(el, x, y);
    }

    // highlighted node sits below the lines and text
    const hilite = document.createElement('div');
    hilite.className = 'mm-hilite';
    hilite.style.width = '256px';
    hilite.style.height = '37px';
    place(hilite, 1284, 519);

    const lines = document.createElementNS('http://www.w3.org/2000/svg', 'svg');
    lines.setAttribute('class', 'map-lines');
    lines.setAttribute('width', '2066');
    lines.setAttribute('height', '1159');
    lines.setAttribute('viewBox', OX + ' ' + OY + ' 2066 1159');
    lines.innerHTML = svg;
    canvas.appendChild(lines);

    groups.forEach(g => g.rows.forEach(row => addText(row[0], g.tx, row[1])));
    extraText.forEach(t => addText(t[0], t[1], t[2]));

    topics.forEach(t => {
        const el = document.createElement('div');
        el.className = 'mm-topic d-flex align-items-center' + (t[6] ? ' mm-topic-on' : '');
        el.textContent = t[0];
        el.style.width = t[3] + 'px';
        el.style.height = t[4] + 'px';
        el.style.paddingLeft = t[5] + 'px';
        place(el, t[1], t[2]);
    });

    const root = document.createElement('div');
    root.className = 'mm-root';
    root.textContent = '作息管理';
    place(root, 715, 1054);

    // Rainbow watermark and mouse cursor go over everything
    const overlay = document.createElementNS('http://www.w3.org/2000/svg', 'svg');
    overlay.setAttribute('class', 'map-lines');
    overlay.setAttribute('width', '2066');
    overlay.setAttribute('height', '1159');
    overlay.setAttribute('viewBox', OX + ' ' + OY + ' 2066 1159');
    overlay.innerHTML = `
        <defs><linearGradient id="rainbow" gradientUnits="userSpaceOnUse" x1="1330" y1="0" x2="1820" y2="0">
            <stop offset="0" stop-color="#f88f8f"/><stop offset="0.08" stop-color="#fcbf8a"/><stop offset="0.2" stop-color="#eef58a"/>
            <stop offset="0.36" stop-color="#8cee9c"/><stop offset="0.52" stop-color="#86f2ee"/><stop offset="0.66" stop-color="#8a9cf4"/>
            <stop offset="0.8" stop-color="#c58cf4"/><stop offset="0.92" stop-color="#f58cd8"/><stop offset="1" stop-color="#f88a98"/>
        </linearGradient></defs>
        <text class="wm-text" x="1328" y="430" font-size="70">众筹新课联系微</text>
        <text class="wm-text" x="1330" y="506" font-size="68" letter-spacing="2">信1225791460</text>
        <path d="M1341 530V551L1346 547 1350 556 1354 554 1350 545H1356Z" fill="#fff" stroke="#222"/>`;
    canvas.appendChild(overlay);
</script>
<script src="https://cdn.jsdelivr.net/npm/bootstrap@5.3.0/dist/js/bootstrap.bundle.min.js"></script>
</body>
</html>
